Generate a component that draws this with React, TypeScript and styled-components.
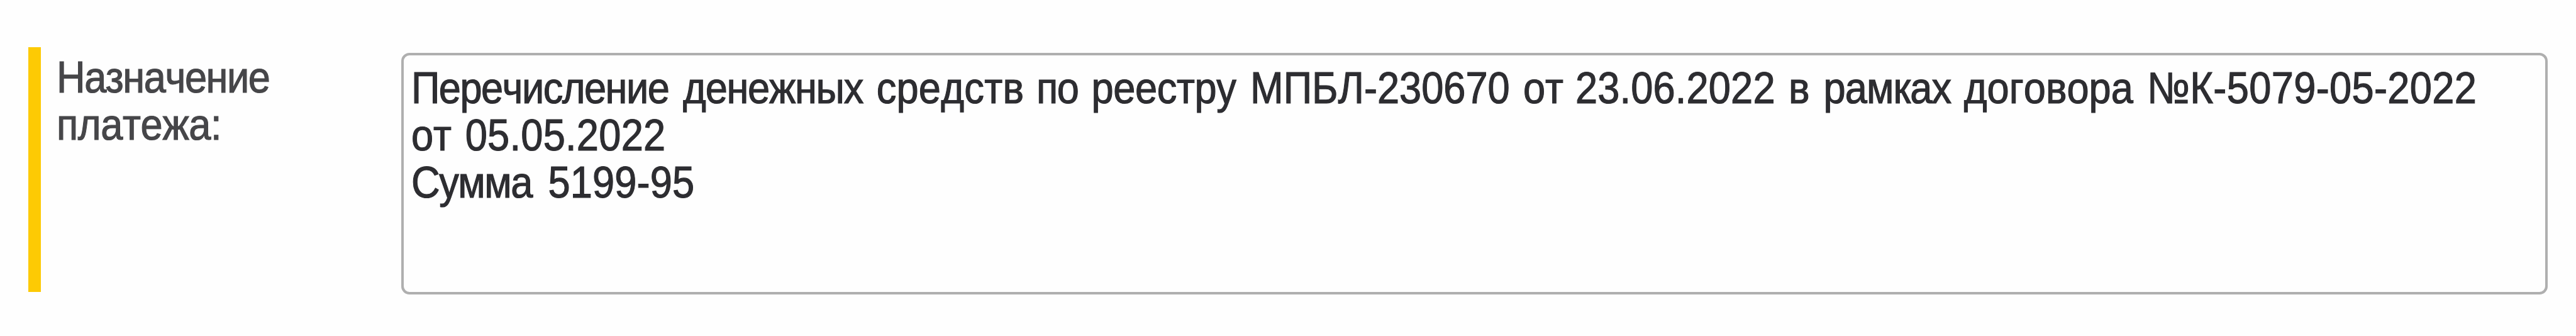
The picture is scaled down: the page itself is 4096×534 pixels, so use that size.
import React from 'react';
import styled, { createGlobalStyle } from 'styled-components';

interface WordProps {
    $width?: number;
    $spacing?: number;
};

interface WordItem {
    text: string;
    width?: number;
    spacing?: number;
};

const GlobalStyle = createGlobalStyle`
    * {
        box-sizing: border-box;
    }

    body {
        margin: 0;
        background-color: #fefefe;
        font-family: 'Liberation Sans', Arial, sans-serif;
    }
`;

const FormRow = styled.div`
    display: flex;
    width: 4096px;
    height: 534px;
    padding: 75px 45px 70px;
`;

const RequiredMark = styled.div`
    flex: none;
    width: 20px;
    background-color: #fdca04;
`;

const FieldLabel = styled.div`
    flex: none;
    width: 573px;
    padding: 11px 0 0 25px;
    color: #464649;
`;

const TextField = styled.div`
    flex: none;
    width: 3413px;
    height: 384px;
    margin-top: 9px;
    padding: 15px 0 0 11.5px;
    border: 4px solid #afafaf;
    border-radius: 13px;
    background-color: #fefefe;
    color: #2d2d31;
`;

/* slightly condensed, the way small hinted Arial looks */
const TextLine = styled.div`
    display: flex;
    width: max-content;
    line-height: 75px;
    font-size: 70px;
    font-kerning: none;
    -webkit-text-stroke: 1.2px currentColor;
    transform: scaleX(0.902);
    transform-origin: left;
`;

const Word = styled.span<WordProps>`
    flex: none;
    width: ${props => props.$width ? `${props.$width}px` : 'auto'};
    letter-spacing: ${props => props.$spacing || 0}px;
    white-space: pre;
`;

const label: WordItem[][] = [
    [{ text: 'Назначение', spacing: -1.6 }],
    [{ text: 'платежа:', spacing: -0.4 }],
];

const purpose: WordItem[][] = [
    [
        { text: 'Перечисление ', width: 479, spacing: -1.7 },
        { text: 'денежных ', width: 341, spacing: -1.4 },
        { text: 'средств ', width: 282, spacing: 0.3 },
        { text: 'по ', width: 97, spacing: -1.6 },
        { text: 'реестру ', width: 280, spacing: -0.4 },
        { text: 'МПБЛ-230670 ', width: 481 },
        { text: 'от ', width: 92 },
        { text: '23.06.2022 ', width: 376, spacing: 0.2 },
        { text: 'в ', width: 61.5 },
        { text: 'рамках ', width: 247.5, spacing: -1 },
        { text: 'договора ', width: 323, spacing: 0 },
        { text: '№К-5079-05-2022', spacing: 0.4 },
    ],
    [
        { text: 'от ', width: 95 },
        { text: '05.05.2022', spacing: 0.3 },
    ],
    [
        { text: 'Сумма ', width: 241, spacing: -1.6 },
        { text: '5199-95', spacing: 0.2 },
    ],
];

const renderLine = (words: WordItem[], index: number) => (
    <TextLine key={index}>
        {words.map((word, i) => (
            <Word key={i} $width={word.width} $spacing={word.spacing}>{word.text}</Word>
        ))}
    </TextLine>
);

const App: React.FC = () => {
    return (
        <>
            <GlobalStyle />
            <FormRow>
                <RequiredMark />
                <FieldLabel>{label.map(renderLine)}</FieldLabel>
                <TextField>{purpose.map(renderLine)}</TextField>
            </FormRow>
        </>
    );
}

export default App;
